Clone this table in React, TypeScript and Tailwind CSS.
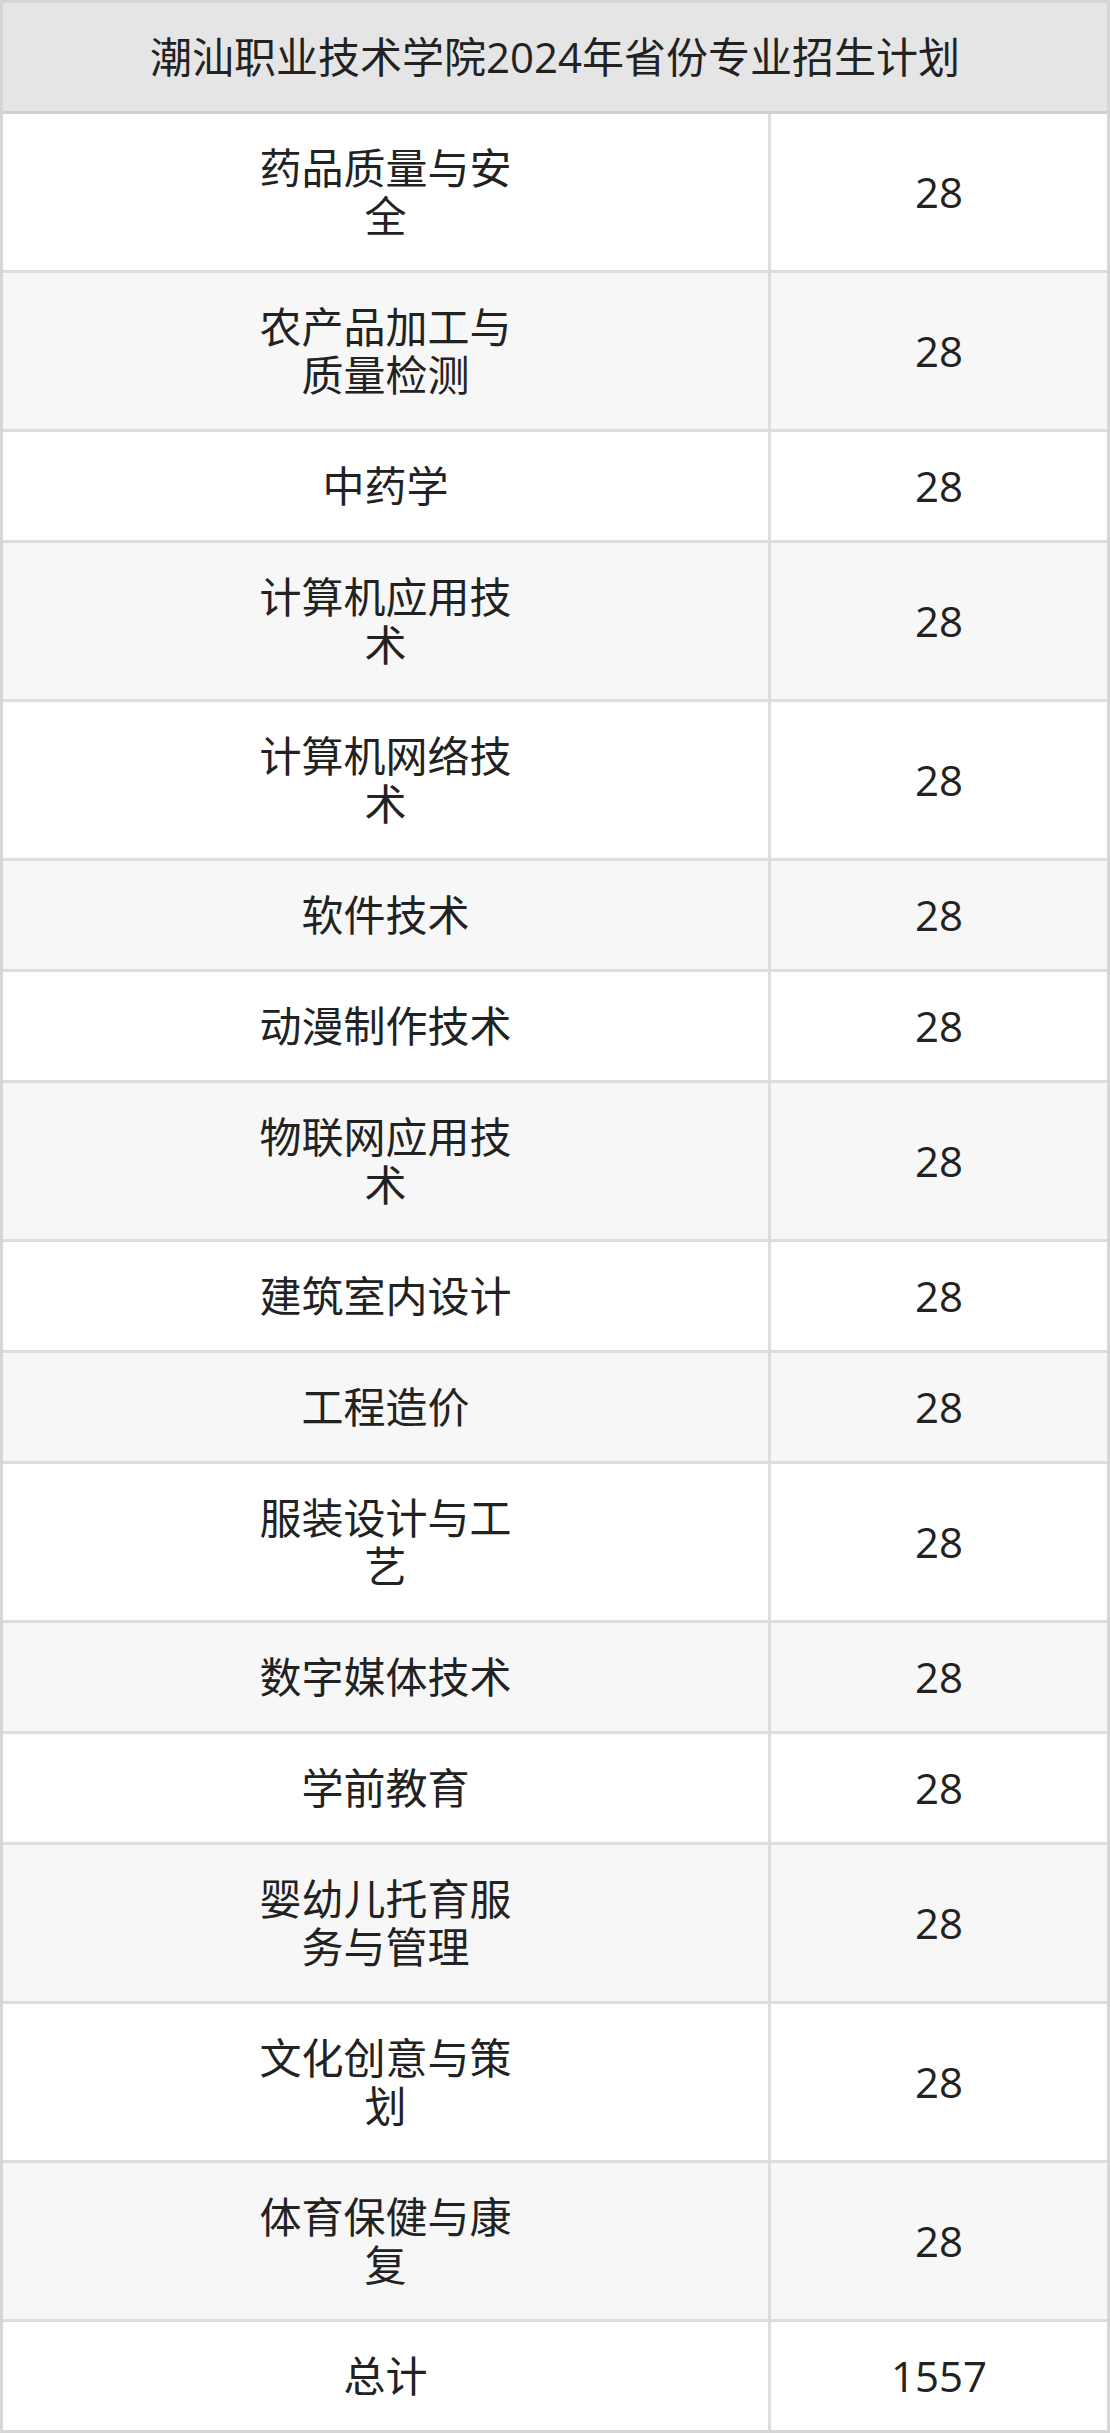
import React from "react";

const rows: [string, string][] = [
  ["药品质量与安全", "28"],
  ["农产品加工与质量检测", "28"],
  ["中药学", "28"],
  ["计算机应用技术", "28"],
  ["计算机网络技术", "28"],
  ["软件技术", "28"],
  ["动漫制作技术", "28"],
  ["物联网应用技术", "28"],
  ["建筑室内设计", "28"],
  ["工程造价", "28"],
  ["服装设计与工艺", "28"],
  ["数字媒体技术", "28"],
  ["学前教育", "28"],
  ["婴幼儿托育服务与管理", "28"],
  ["文化创意与策划", "28"],
  ["体育保健与康复", "28"],
  ["总计", "1557"],
];

export default function App() {
  return (
    <div
      className="w-[1110px] bg-white text-[#222222]"
      style={{ fontFamily: '"Open Sans", "Noto Sans CJK SC", sans-serif' }}
    >
      <div className="border-[3px] border-[#d6d6d6]">
        <div className="h-[111px] bg-[#e5e5e5] flex items-center justify-center text-[42px] leading-[48px] border-b-[3px] border-[#d0d0d0]">
          潮汕职业技术学院2024年省份专业招生计划
        </div>
        {rows.map(([name, num], i) => (
          <div
            key={i}
            className={
              "flex text-[42px] leading-[48px] " +
              (i > 0 ? "border-t-[3px] border-[#dddddd] " : "") +
              (i % 2 === 1 ? "bg-[#f7f7f7]" : "bg-white")
            }
          >
            <div className="w-[768px] flex items-center justify-center py-[30px] border-r-[3px] border-[#dddddd]">
              <div className="max-w-[270px] text-center break-all">{name}</div>
            </div>
            <div className="flex-1 flex items-center justify-center py-[30px]">
              {num}
            </div>
          </div>
        ))}
      </div>
    </div>
  );
}
